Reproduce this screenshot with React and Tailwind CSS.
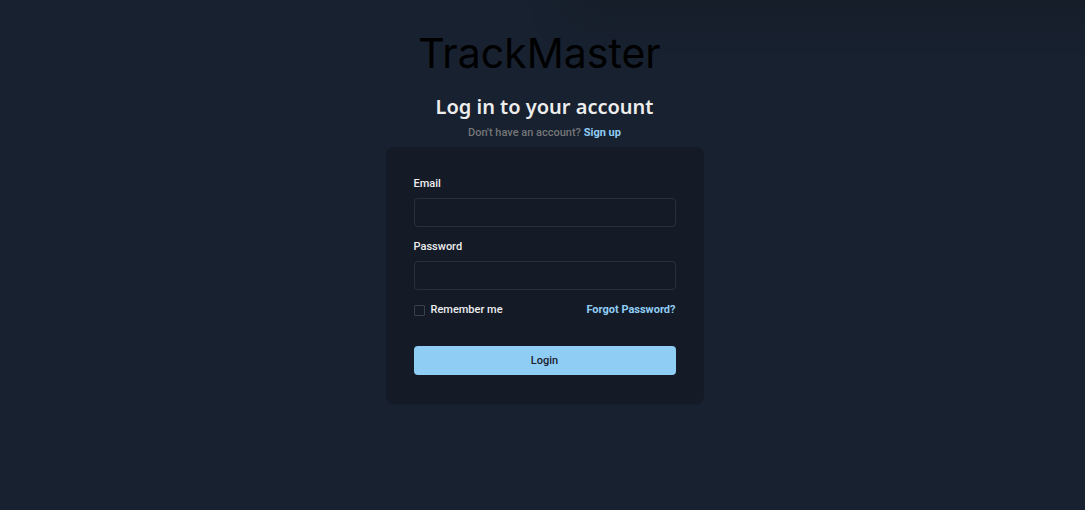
function Field({ id, label, type }) {
  return (
    <div>
      <label htmlFor={id} className="block">{label}</label>
      <input
        id={id}
        type={type}
        className="mt-1.5 block h-[29px] w-full rounded border border-[#2a303b] bg-transparent px-3 outline-none focus:border-[#90cdf4]"
      />
    </div>
  );
}

export default function App() {
  return (
    <div className="relative flex min-h-screen flex-col items-center overflow-hidden bg-[#18212f] pl-1 font-['Roboto',sans-serif] text-[11px] leading-4 font-medium text-[#ededee]">
      <div className="absolute -top-5 left-1/2 h-5 w-full shadow-[40px_0px_36px_10px_rgba(20,26,35,0.6)]" />
      <header className="relative flex flex-col items-center">
        <div className="mt-7 pr-2.5 font-['Inter',sans-serif] text-[41px] leading-[50px] font-normal text-black">
          TrackMaster
        </div>
        <h1 className="mt-[13px] font-['Noto_Sans',sans-serif] text-[20px] leading-8 font-semibold">
          Log in to your account
        </h1>
        <p className="mt-0.5 text-[#747679]">
          Don't have an account?{" "}
          <a href="#signup" className="font-bold text-[#90cdf4]">Sign up</a>
        </p>
      </header>
      <main className="relative mt-1.5 w-full max-w-[318px] rounded-lg bg-[#141b27] px-7 pt-[29px] pb-[29px] shadow-xs">
        <form className="flex flex-col" onSubmit={(e) => e.preventDefault()}>
          <div className="flex flex-col gap-3">
            <Field id="email" label="Email" type="email" />
            <Field id="password" label="Password" type="password" />
          </div>
          <div className="mt-3 flex items-center justify-between">
            <label className="flex items-center gap-1.5">
              <input
                type="checkbox"
                className="size-[11px] appearance-none rounded-[1px] border border-[#3a404a] checked:bg-[#90cdf4]"
              />
              Remember me
            </label>
            <a href="#forgot" className="font-bold text-[#90cdf4]">Forgot Password?</a>
          </div>
          <button type="submit" className="mt-7 h-[29px] rounded bg-[#90cdf4] text-[#1a202c]">
            Login
          </button>
        </form>
      </main>
    </div>
  );
}
